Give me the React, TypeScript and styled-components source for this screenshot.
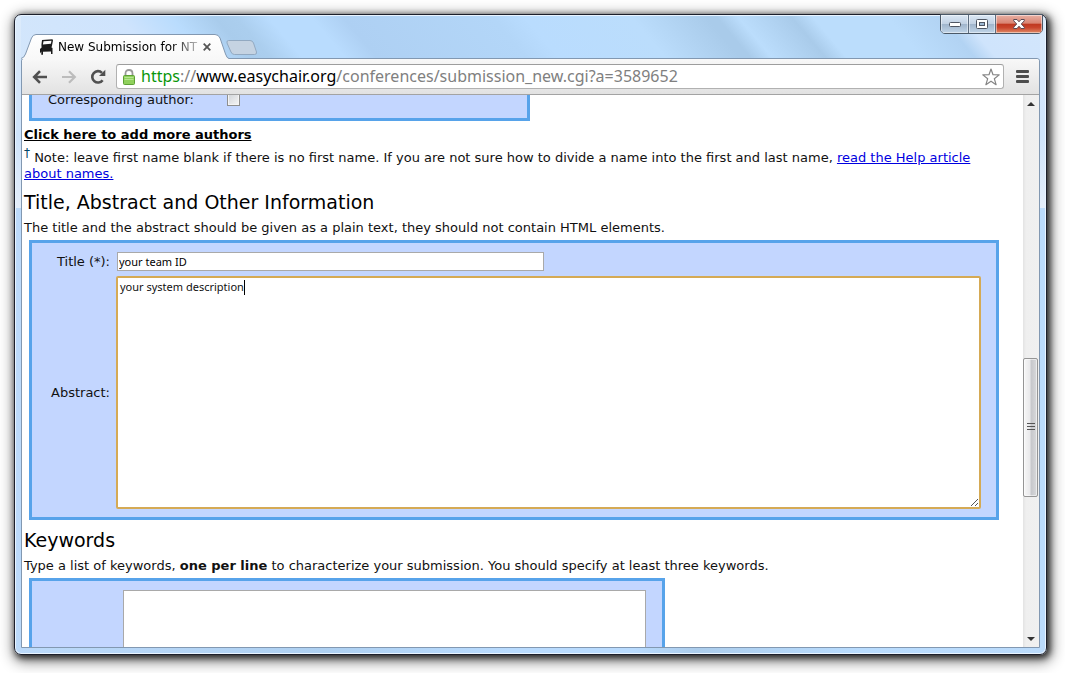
import React from 'react';
import styled, { createGlobalStyle, css } from 'styled-components';

const GlobalStyle = createGlobalStyle`
  * { box-sizing: border-box; }
  body { margin: 0; background: #fff; }
  button { font: inherit; border: 0; padding: 0; background: none; cursor: pointer; }
`;

const pageFont = "'DejaVu Sans', Verdana, sans-serif";
const uiFont = "'Noto Sans', sans-serif";

const Desktop = styled.div`
  display: flex;
  height: 100vh;
  min-height: 400px;
  padding: 14px 18px 18px 14px;
`;

const BrowserWindow = styled.div`
  flex: 1;
  min-width: 0;
  display: flex;
  flex-direction: column;
  padding: 0 6px 6px;
  border: 1px solid #1c1f2b;
  border-radius: 7px;
  background:
    linear-gradient(#dcebfb 0, #cfe4fb 120px, #e4eefa 193px, transparent 193px) left top / 6px 100% no-repeat,
    linear-gradient(#dcebfb 0, #cfe4fb 120px, #e4eefa 193px, transparent 193px) right top / 6px 100% no-repeat,
    linear-gradient(50deg,
      #d3e6fb 0, #cfe4fd 13%, #b9dcfd 18%, #a9ccec 22%, #abceee 24%, #b9dcfe 27%, #b9dcfe 31%,
      #aed0f3 34%, #b3d6f8 48%, #b9dcfe 51%, #bbddfc 61%, #a9cbea 68%, #a9cbea 69%, #bbddfc 71%,
      #a9cbea 76%, #bbddfc 78%, #bbddfc 85%, #b2d3f3 90%, #cfe4fc 92%, #d3e6fc 100%) 0 0 / 100% 44px no-repeat,
    linear-gradient(90deg, #bcdafa, #aed0f1 30%, #b9dbfe 48%, #b9dbfe 60%, #accdec 66%, #b9dcfe 82%, #bbdbfb);
  box-shadow: inset 0 0 0 1px #e9f4ff, 2px 2px 6px 1px #000b, 2px 4px 14px 3px #0007;
`;

const TitleBar = styled.header`
  display: flex;
  align-items: flex-end;
  height: 43px;
  flex: none;
`;

const Tab = styled.div`
  position: relative;
  z-index: 1;
  display: flex;
  align-items: center;
  width: 208px;
  height: 25px;
  margin-bottom: -1px;
  padding: 0 17px 0 18px;
  font: 12px/24px ${pageFont};
  color: #111;
`;

const TabShape = styled.svg`
  position: absolute;
  inset: 0;
  z-index: -1;
`;

const TabTitle = styled.span`
  flex: 1;
  margin-left: 4px;
  overflow: hidden;
  white-space: nowrap;
  background: linear-gradient(90deg, #000 112px, #ccc 142px);
  background-clip: text;
  color: transparent;
`;

const IconButton = styled.button`
  display: flex;
  align-items: center;
  justify-content: center;
  flex: none;
`;

const TabClose = styled(IconButton)`
  width: 10px;
  height: 14px;
`;

const NewTab = styled(IconButton)`
  align-self: flex-end;
  margin: 0 0 2px -4px;
`;

const WindowButtons = styled.div`
  display: flex;
  align-self: flex-start;
  height: 20px;
  margin: -1px -3px 0 auto;
  border: 1px solid #4b5968;
  border-radius: 0 0 5px 5px;
  overflow: hidden;
  flex: none;
`;

const WindowButton = styled(IconButton)<{ $close?: boolean }>`
  width: 27px;
  box-shadow: inset 0 0 0 1px #ffffff77;
  background: linear-gradient(#dbe7f4 0, #c2d2e4 48%, #9fb4cb 50%, #c0d4e8 100%);
  & + & { border-left: 1px solid #5d6d80; }
  ${p => p.$close && css`
    width: 47px;
    background: linear-gradient(#e8b0a4 0, #d98472 46%, #bf3820 50%, #c9452c 70%, #e08b68 100%);
  `}
`;

const Client = styled.div`
  flex: 1;
  min-height: 0;
  display: flex;
  flex-direction: column;
  border: 1px solid #8298b1;
  border-radius: 3px 3px 0 0;
  background: #fff;
`;

const Toolbar = styled.nav`
  display: flex;
  align-items: center;
  flex: none;
  height: 36px;
  padding: 0 10px 0 9px;
  border-bottom: 1px solid #a3a3a3;
  border-radius: 3px 3px 0 0;
  background: linear-gradient(#f8f8f8, #e2e2e2);
`;

const NavButton = styled(IconButton)`
  width: 17px;
  height: 18px;
  margin-right: 12px;
`;

const AddressBar = styled.div`
  flex: 1;
  min-width: 0;
  display: flex;
  align-items: center;
  height: 25px;
  margin: 0 12px 0 -2px;
  padding: 0 3px 0 6px;
  border: 1px solid #b1b1b1;
  border-top-color: #9d9d9d;
  border-radius: 3px;
  background: #fff;
`;

const Url = styled.div`
  flex: 1;
  min-width: 0;
  margin-left: 6px;
  padding-bottom: 2px;
  overflow: hidden;
  white-space: nowrap;
  font: 16px/20px ${uiFont};
  color: #808080;
  outline: 0;
`;

const Scheme = styled.span`color: #0a960a;`;
const Host = styled.span`color: #000;`;

const Viewport = styled.div`
  flex: 1;
  min-height: 0;
  display: flex;
  overflow: hidden;
`;

const Page = styled.main`
  flex: 1;
  min-width: 0;
  overflow: hidden;
  padding: 0 2px;
  font: 13px/16px ${pageFont};
  color: #111;
`;

const Panel = styled.section<{ $width?: number }>`
  margin: 0 22px 0 5px;
  max-width: ${p => (p.$width ? `${p.$width}px` : 'none')};
  border: 3px solid #57a3ea;
  background: #c3d6ff;
`;

const AuthorPanel = styled(Panel)`
  display: flex;
  align-items: center;
  height: 48px;
  margin-top: -22px;
  padding: 5px 16px 0;
`;

const AuthorLabel = styled.label`width: 179px;`;

const CheckBox = styled.input`
  appearance: none;
  width: 13px;
  height: 13px;
  margin: 0;
  border: 1px solid #8e8f8f;
  background: linear-gradient(135deg, #cfd3d8, #f6f6f6);
  box-shadow: inset 0 0 0 1px #f4f4f4;
`;

const AddAuthors = styled.a`
  display: block;
  margin-top: 6px;
  font-weight: bold;
  color: #000;
`;

const Note = styled.p`
  margin: 7px 0 0;
  padding-right: 24px;
  sup { font-size: 12px; line-height: 0; color: #046; }
  a { color: #0000e0; }
`;

const Heading = styled.h2`
  margin: 8px 0 5px;
  font-size: 19px;
  font-weight: normal;
  line-height: 25px;
  color: #000;
`;

const Intro = styled.p`margin: 0 0 4px;`;

const FormPanel = styled(Panel)`
  display: grid;
  grid-template-columns: 78px 1fr;
  gap: 5px 7px;
  align-items: center;
  padding: 9px 15px 8px 0;
`;

const FieldLabel = styled.label`text-align: right;`;

const TitleInput = styled.input`
  width: 427px;
  height: 19px;
  padding: 0 1px;
  border: 1px solid #a9a9a9;
  font: 11px/17px ${uiFont};
  color: #000;
  outline: 0;
`;

const AbstractField = styled.div`
  position: relative;
  display: flex;
  margin-left: -1px;
`;

const AbstractInput = styled.textarea`
  width: 100%;
  height: 233px;
  padding: 0 2px;
  border: 2px solid #d5aa55;
  border-radius: 2px;
  font: 11px/17px ${uiFont};
  color: #111;
  resize: none;
  outline: 0;
`;

const Caret = styled.span`
  position: absolute;
  left: 128px;
  top: 4px;
  width: 1px;
  height: 15px;
  background: #000;
`;

const Grip = styled.svg`
  position: absolute;
  right: 2px;
  bottom: 2px;
`;

const KeywordPanel = styled(Panel)`padding: 9px 16px 9px 91px;`;

const KeywordInput = styled.textarea`
  display: block;
  width: 100%;
  height: 120px;
  border: 1px solid #a9a9a9;
  resize: none;
  outline: 0;
`;

const ScrollBar = styled.div`
  flex: none;
  display: flex;
  flex-direction: column;
  width: 16px;
  background: linear-gradient(90deg, #e3e3e3, #efefef 3px, #f0f0f0);
`;

const ScrollArrow = styled(IconButton)`height: 17px;`;
const Track = styled.div<{ $share: number }>`flex: ${p => p.$share} 0 0;`;

const Thumb = styled.div`
  display: flex;
  align-items: center;
  justify-content: center;
  width: 15px;
  height: 139px;
  border: 1px solid #959595;
  border-radius: 2px;
  background: linear-gradient(90deg, #f7f7f7, #e9e9eb 45%, #c6c7cb 55%, #d9dadc);
  box-shadow: inset 0 0 0 1px #ffffff88;
`;

export default function App() {
  return (
    <Desktop>
      <GlobalStyle />
      <BrowserWindow>
        <TitleBar>
          <Tab>
            <TabShape width="208" height="25" viewBox="0 0 208 25" aria-hidden="true">
              <defs>
                <linearGradient id="tabFill" x2="0" y2="1">
                  <stop stopColor="#fff" />
                  <stop offset="1" stopColor="#f8f8f8" />
                </linearGradient>
              </defs>
              <path d="M0 25V24.500Q3 24 4.500 20L10.500 4Q12 .5 15 .5H194Q197.500 .5 199 4L204.500 20Q206 24.500 208 24.500V25Z" fill="url(#tabFill)" />
              <path d="M0 24.500Q3 24 4.500 20L10.500 4Q12 .5 15 .5H194Q197.500 .5 199 4L204.500 20Q206 24.500 208 24.500" fill="none" stroke="#8298b1" />
            </TabShape>
            <svg width="15" height="16" viewBox="0 0 15 16" fill="#1b1b1b" aria-hidden="true">
              <path fillRule="evenodd" d="M3 1 13.500.3 14 1.500 13 6.500 12.500 8.500 13.500 9V15H12V12.500L4 12.800V15.800H2.300V12.500L1 14.500V10L2.600 8.500 2.400 6ZM4.500 2.300 3.900 5.400 11.900 4.800 12.500 1.700Z" />
            </svg>
            <TabTitle>New Submission for NT</TabTitle>
            <TabClose aria-label="Close tab">
              <svg width="8" height="8" viewBox="0 0 8 8" stroke="#555" strokeWidth="1.800">
                <path d="M.7.7 7.300 7.300M7.300.7.7 7.300" />
              </svg>
            </TabClose>
          </Tab>
          <NewTab aria-label="New tab">
            <svg width="33" height="17" viewBox="0 0 33 17">
              <path d="M3.500 1.500H25Q27.500 1.500 28.500 4L31.500 13Q32 15.500 29.500 15.500H9.500Q7 15.500 6 13L2 4Q1.500 1.500 3.500 1.500Z" fill="#c5d3e2" stroke="#92a9c1" />
            </svg>
          </NewTab>
          <WindowButtons>
            <WindowButton aria-label="Minimize">
              <svg width="12" height="5" viewBox="0 0 12 5"><rect x=".5" y=".5" width="11" height="4" rx="1" fill="#fff" stroke="#4f5663" /></svg>
            </WindowButton>
            <WindowButton aria-label="Maximize">
              <svg width="12" height="10" viewBox="0 0 12 10" stroke="#4f5663">
                <rect x=".5" y=".5" width="11" height="9" rx="1" fill="#fff" />
                <rect x="3.500" y="3.500" width="5" height="3" fill="#9db8d2" />
              </svg>
            </WindowButton>
            <WindowButton $close aria-label="Close">
              <svg width="12" height="10" viewBox="0 0 12 10">
                <path d="M.7.5H4L6 2.800 8 .5H11.300V1.800L8.300 5 11.300 8.200V9.500H8L6 7.200 4 9.500H.7V8.200L3.700 5 .7 1.800Z" fill="#fff" stroke="#5b4a55" />
              </svg>
            </WindowButton>
          </WindowButtons>
        </TitleBar>

        <Client>
          <Toolbar>
            <NavButton aria-label="Back">
              <svg width="16" height="14" viewBox="0 0 16 14" fill="none" stroke="#505050" strokeWidth="2.600">
                <path d="M15 7H2.500M8 1.200 2.200 7 8 12.800" />
              </svg>
            </NavButton>
            <NavButton aria-label="Forward">
              <svg width="16" height="14" viewBox="0 0 16 14" fill="none" stroke="#bcbcbc" strokeWidth="2.200">
                <path d="M1 7H13.500M8 1.200 13.800 7 8 12.800" />
              </svg>
            </NavButton>
            <NavButton aria-label="Reload">
              <svg width="16" height="16" viewBox="0 0 16 16" fill="none" stroke="#505050" strokeWidth="2.600">
                <path d="M12.600 11.200A5.700 5.700 0 1 1 12 3.800" />
                <path d="M15.300.8V7H9Z" fill="#505050" stroke="none" />
              </svg>
            </NavButton>
            <AddressBar>
              <svg width="12" height="16" viewBox="0 0 12 16" aria-hidden="true">
                <path d="M2.500 8V4.500Q2.500 1 6 1T9.500 4.500V8" fill="none" stroke="#9a9a9a" strokeWidth="1.800" />
                <rect x=".5" y="6.500" width="11" height="9" rx="1" fill="#8fd05c" stroke="#5da035" />
                <path d="M1.500 8.500H10.500M1.500 10.500H10.500" stroke="#b6e592" />
              </svg>
              <Url role="textbox" aria-label="Address" contentEditable suppressContentEditableWarning spellCheck={false}>
                <Scheme>https</Scheme>://<Host>www.easychair.org</Host>/conferences/submission_new.cgi?a=3589652
              </Url>
              <IconButton aria-label="Bookmark this page">
                <svg width="18" height="18" viewBox="0 0 18 18" fill="#fff" stroke="#858585" strokeWidth="1.200" strokeLinejoin="round">
                  <path d="M9 1 11 6.700 17.200 6.900 12.300 10.700 14.100 16.700 9 13.200 3.900 16.700 5.700 10.700.8 6.900 7 6.700Z" />
                </svg>
              </IconButton>
            </AddressBar>
            <IconButton aria-label="Menu">
              <svg width="13" height="13" viewBox="0 0 13 13" fill="#4d4d4d">
                <rect width="13" height="3" rx="1" />
                <rect y="5" width="13" height="3" rx="1" />
                <rect y="10" width="13" height="3" rx="1" />
              </svg>
            </IconButton>
          </Toolbar>

          <Viewport>
            <Page>
              <AuthorPanel $width={501}>
                <AuthorLabel htmlFor="corresponding">Corresponding author:</AuthorLabel>
                <CheckBox id="corresponding" type="checkbox" />
              </AuthorPanel>
              <AddAuthors href="#authors">Click here to add more authors</AddAuthors>
              <Note>
                <sup>†</sup> Note: leave first name blank if there is no first name. If you are not sure how to divide a
                name into the first and last name, <a href="#names">read the Help article about names.</a>
              </Note>

              <Heading>Title, Abstract and Other Information</Heading>
              <Intro>The title and the abstract should be given as a plain text, they should not contain HTML elements.</Intro>
              <FormPanel>
                <FieldLabel htmlFor="title">Title (*):</FieldLabel>
                <TitleInput id="title" type="text" defaultValue="your team ID" />
                <FieldLabel htmlFor="abstract">Abstract:</FieldLabel>
                <AbstractField>
                  <AbstractInput id="abstract" spellCheck={false} defaultValue="your system description" />
                  <Caret />
                  <Grip width="9" height="9" viewBox="0 0 9 9" stroke="#555" aria-hidden="true">
                    <path d="M1 8 8 1M5 8 8 5" />
                  </Grip>
                </AbstractField>
              </FormPanel>

              <Heading>Keywords</Heading>
              <Intro>
                Type a list of keywords, <b>one per line</b> to characterize your submission. You should specify at least
                three keywords.
              </Intro>
              <KeywordPanel $width={636}>
                <KeywordInput aria-label="Keywords" />
              </KeywordPanel>
            </Page>
            <ScrollBar>
              <ScrollArrow aria-label="Scroll up">
                <svg width="8" height="4" viewBox="0 0 8 4" fill="#333"><path d="M0 4 4 0 8 4Z" /></svg>
              </ScrollArrow>
              <Track $share={246} />
              <Thumb>
                <svg width="8" height="9" viewBox="0 0 8 9" stroke="#555"><path d="M0 .5H8M0 3.500H8M0 6.500H8" /></svg>
              </Thumb>
              <Track $share={133} />
              <ScrollArrow aria-label="Scroll down">
                <svg width="8" height="4" viewBox="0 0 8 4" fill="#333"><path d="M0 0H8L4 4Z" /></svg>
              </ScrollArrow>
            </ScrollBar>
          </Viewport>
        </Client>
      </BrowserWindow>
    </Desktop>
  );
}
